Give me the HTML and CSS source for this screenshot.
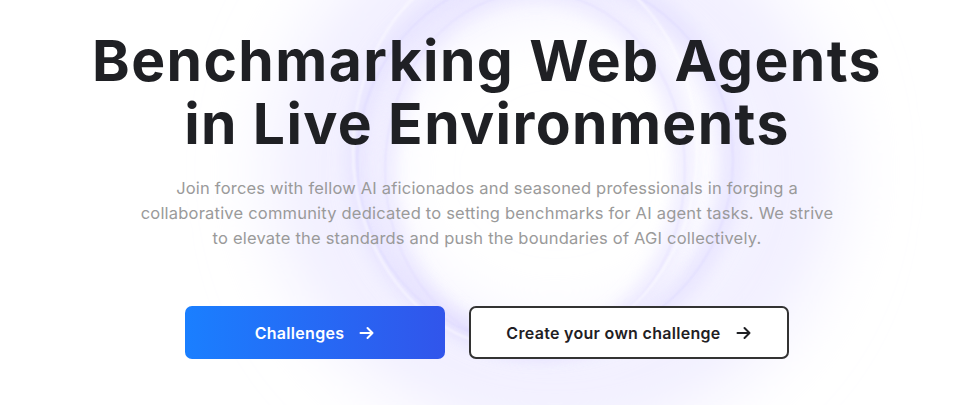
FILE: index.html
```html
<!DOCTYPE html>
<html lang="en">
<head>
<meta charset="utf-8">
<title>Benchmarking Web Agents</title>
<link rel="stylesheet" href="styles.css">
</head>
<body>
<section class="hero">
  <svg class="hero-bg" width="967" height="405" viewBox="0 0 967 405" aria-hidden="true">
    <defs>
      <filter id="blur-xl" x="-50%" y="-50%" width="200%" height="200%"><feGaussianBlur stdDeviation="40"/></filter>
      <filter id="blur-md" x="-50%" y="-50%" width="200%" height="200%"><feGaussianBlur stdDeviation="9"/></filter>
      <filter id="blur-sm" x="-50%" y="-50%" width="200%" height="200%"><feGaussianBlur stdDeviation="1.2"/></filter>
    </defs>
    <ellipse cx="555" cy="170" rx="235" ry="220" fill="none" stroke="#edeaff" stroke-width="80" filter="url(#blur-xl)"/>
    <ellipse cx="545" cy="160" rx="188" ry="188" fill="none" stroke="#e4e0ff" stroke-width="22" opacity="0.8" filter="url(#blur-md)"/>
    <ellipse cx="535" cy="170" rx="150" ry="178" fill="none" stroke="#e2ddff" stroke-width="14" opacity="0.7" filter="url(#blur-md)"/>
    <ellipse cx="545" cy="160" rx="188" ry="188" fill="none" stroke="#cfc8ff" stroke-width="1" opacity="0.6" filter="url(#blur-sm)"/>
    <ellipse cx="535" cy="170" rx="150" ry="178" fill="none" stroke="#d3ccff" stroke-width="1" opacity="0.55" filter="url(#blur-sm)"/>
    <ellipse cx="525" cy="150" rx="172" ry="200" fill="none" stroke="#ffffff" stroke-width="2" opacity="0.6" filter="url(#blur-sm)"/>
  </svg>
  <div class="hero-content">
    <h1 class="title">Benchmarking Web Agents<br>in Live Environments</h1>
    <p class="lead">Join forces with fellow AI aficionados and seasoned professionals in forging a<br>collaborative community dedicated to setting benchmarks for AI agent tasks. We strive<br>to elevate the standards and push the boundaries of AGI collectively.</p>
    <div class="actions">
      <a class="btn btn-primary" href="#">Challenges
        <svg class="arrow" width="16" height="16" viewBox="0 0 16 16" aria-hidden="true"><path d="M1.5 8h12M8.5 3 13.5 8l-5 5" fill="none" stroke="currentColor" stroke-width="2" stroke-linecap="round" stroke-linejoin="round"/></svg>
      </a>
      <a class="btn btn-outline" href="#">Create your own challenge
        <svg class="arrow" width="16" height="16" viewBox="0 0 16 16" aria-hidden="true"><path d="M1.5 8h12M8.5 3 13.5 8l-5 5" fill="none" stroke="currentColor" stroke-width="2" stroke-linecap="round" stroke-linejoin="round"/></svg>
      </a>
    </div>
  </div>
</section>
</body>
</html>
```

FILE: styles.css
```css
* { box-sizing: border-box; }
html, body { margin: 0; padding: 0; }
body {
  background: #ffffff;
  font-family: "Inter", "Noto Sans", sans-serif;
  color: #1f2024;
}
.hero {
  position: relative;
  width: 967px;
  height: 405px;
  overflow: hidden;
  background: #ffffff;
}
.hero-bg {
  position: absolute;
  left: 0;
  top: 0;
}
.hero-content {
  position: relative;
  display: flex;
  flex-direction: column;
  align-items: center;
  padding-top: 29px;
  padding-left: 7px;
}
.title {
  margin: 0;
  font-size: 57px;
  line-height: 63px;
  font-weight: 700;
  letter-spacing: 1.4px;
  text-align: center;
  color: #1f2024;
}
.lead {
  margin: 21px 0 0;
  white-space: nowrap;
  font-size: 16.5px;
  line-height: 25px;
  letter-spacing: 0.2px;
  color: #9a9a9a;
  text-align: center;
}
.actions {
  display: flex;
  gap: 24px;
  margin-top: 55px;
}
.btn {
  display: flex;
  align-items: center;
  justify-content: center;
  gap: 15px;
  height: 53px;
  border-radius: 7px;
  font-size: 16px;
  font-weight: 600;
  letter-spacing: 0.3px;
  text-decoration: none;
}
.btn-primary {
  width: 260px;
  color: #ffffff;
  background: linear-gradient(90deg, #1a7fff 0%, #3155eb 100%);
}
.btn-outline {
  width: 320px;
  color: #1f2024;
  background: #ffffff;
  border: 2px solid #333333;
}
.arrow { flex: none; }
```
